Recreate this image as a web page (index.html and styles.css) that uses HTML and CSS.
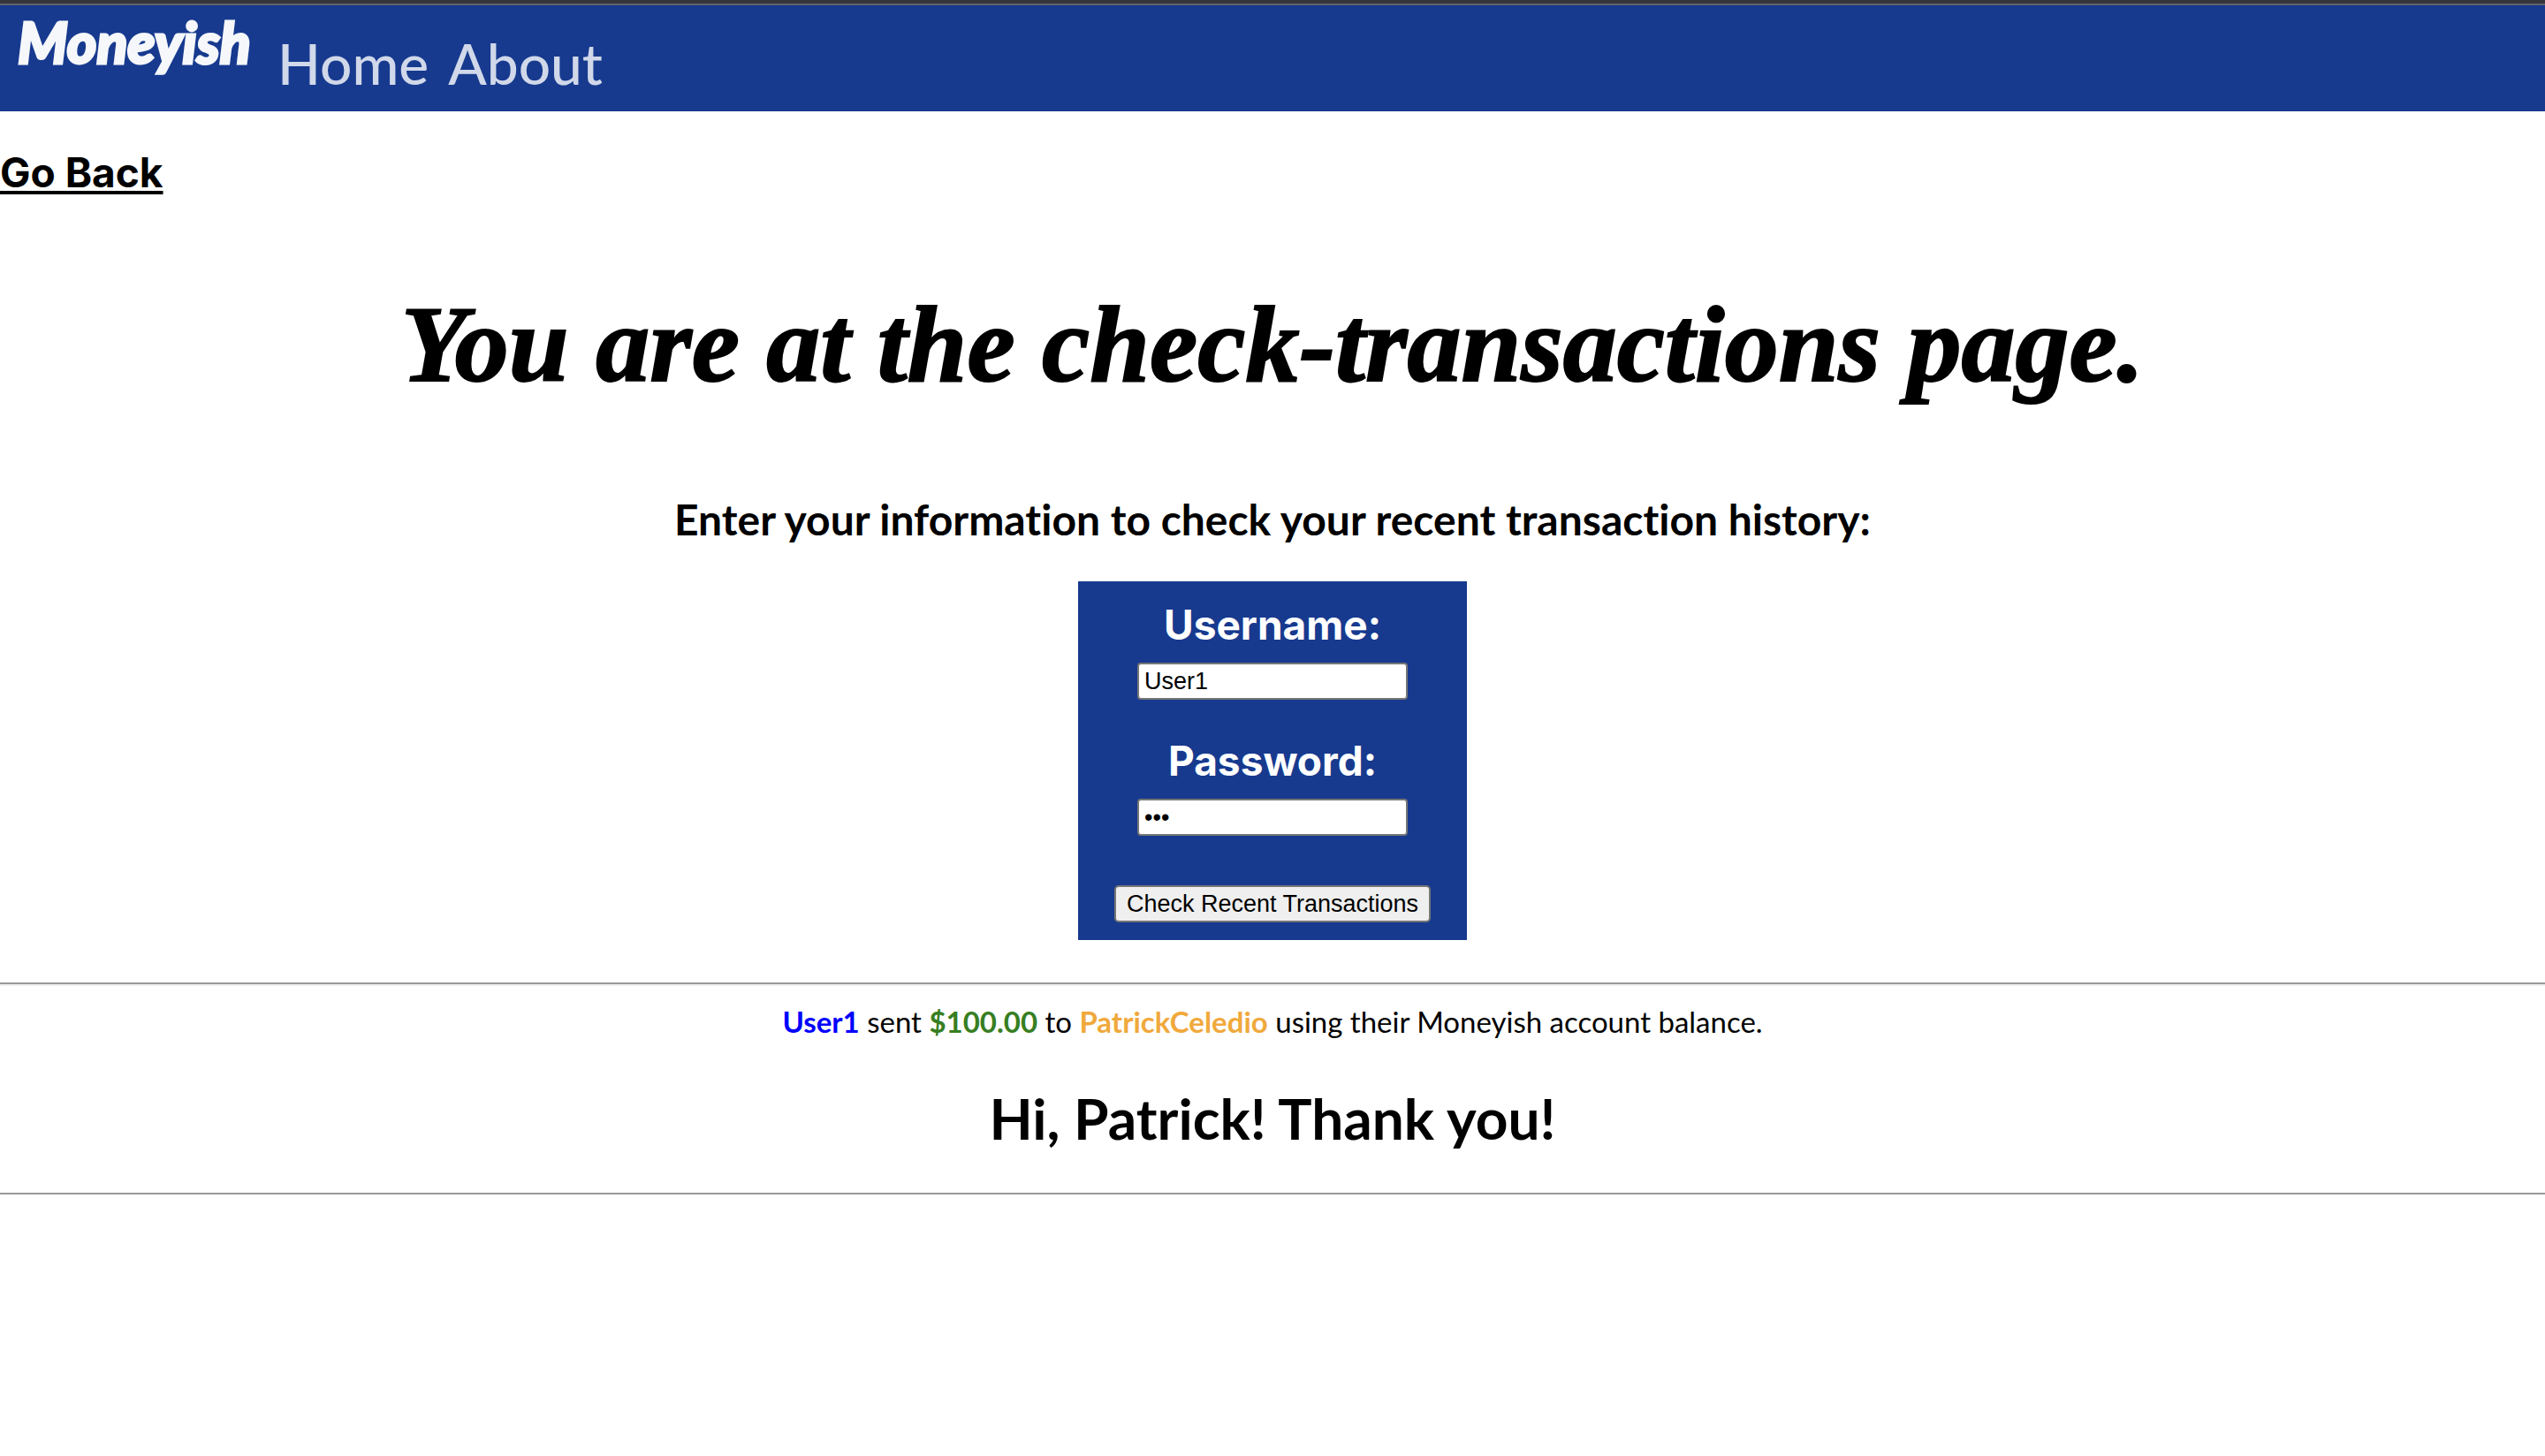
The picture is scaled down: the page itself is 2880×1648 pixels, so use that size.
FILE: index.html
```html
<!DOCTYPE html>
<html lang="en">
<head>
<meta charset="utf-8">
<title>Moneyish</title>
<link rel="stylesheet" href="styles.css">
</head>
<body>
<header class="navbar">
  <a class="brand" href="#">
    <svg class="logo" viewBox="0 0 264 80" width="264" height="80" role="img" aria-label="Moneyish">
      <text class="logo-text" x="0" y="54">Moneyish</text>
    </svg>
  </a>
  <nav class="links">
    <a class="nav-link" href="#">Home</a>
    <a class="nav-link" href="#">About</a>
  </nav>
</header>
<main class="page">
  <a class="back" href="#">Go Back</a>
  <h1 class="title">You are at the check-transactions page.</h1>
  <h2 class="subtitle">Enter your information to check your recent transaction history:</h2>
  <form class="card">
    <label class="label" for="username">Username:</label>
    <input class="field" id="username" type="text" value="User1">
    <label class="label" for="password">Password:</label>
    <input class="field" id="password" type="password" value="abc">
    <button class="submit" type="button">Check Recent Transactions</button>
  </form>
  <section class="transaction">
    <p class="summary"><b class="sender">User1</b> sent <b class="amount">$100.00</b> to <b class="receiver">PatrickCeledio</b> using their Moneyish account balance.</p>
    <h2 class="note">Hi, Patrick! Thank you!</h2>
  </section>
</main>
</body>
</html>
```
FILE: styles.css
```css
* { box-sizing: border-box; }

body {
  margin: 0;
  background: #fff;
  color: #000;
  font-family: Lato, sans-serif;
  font-variant-ligatures: none;
}

.navbar {
  display: flex;
  align-items: flex-start;
  gap: 30px;
  height: 126px;
  padding: 14px 20px;
  border-top: 4px solid #35363a;
  background: #173a8f;
  box-shadow: inset 0 2px #5f6368;
}

.brand { text-decoration: none; }

.logo {
  display: block;
  overflow: visible;
  fill: #f5f7fa;
}

.logo-text {
  stroke: #f5f7fa;
  stroke-width: 3px;
  font: italic 900 64px Lato, sans-serif;
}

.links {
  display: flex;
  gap: 22px;
  padding-top: 14px;
}

.nav-link {
  color: #d0d8e9;
  font-size: 64px;
  font-weight: 500;
  line-height: 80px;
  text-decoration: none;
}

.page {
  display: flex;
  flex-direction: column;
  align-items: center;
}

.back {
  align-self: flex-start;
  margin-top: 40px;
  color: #000;
  font: 700 46px/58px Inter, sans-serif;
  text-decoration-thickness: 4px;
  text-underline-offset: 4px;
}

.title {
  margin: 86px 0 0;
  font: italic 700 122px/160px "Liberation Serif", serif;
  -webkit-text-stroke: 2px #000;
}

.subtitle {
  margin: 88px 0 0;
  font-size: 48px;
  line-height: 60px;
}

.card {
  display: flex;
  flex-direction: column;
  align-items: center;
  width: 440px;
  margin-top: 40px;
  padding: 20px 0;
  background: #173a8f;
}

.label {
  color: #fff;
  font: 700 46px/58px Inter, sans-serif;
}

.field {
  width: 306px;
  height: 42px;
  margin: 14px 0 40px;
  padding: 2px 6px;
  border: 2px solid #767676;
  border-radius: 4px;
  background: #fff;
  font: 27px/32px "Liberation Sans", sans-serif;
}

.submit {
  height: 42px;
  margin-top: 16px;
  padding: 0 12px;
  border: 2px solid #767676;
  border-radius: 5px;
  background: #efefef;
  color: #000;
  font: 27px/36px "Liberation Sans", sans-serif;
}

.transaction {
  align-self: stretch;
  margin-top: 48px;
  padding: 20px 0 44px;
  border-top: 2px solid #999;
  border-bottom: 2px solid #999;
  box-shadow: inset 0 2px #eee, 0 2px #eee;
  text-align: center;
}

.summary {
  margin: 0;
  font-size: 33px;
  line-height: 44px;
}

.sender { color: #00f; }
.amount { color: #377e22; }
.receiver { color: #f0a93c; }

.note {
  margin: 48px 0 0;
  font-size: 64px;
  line-height: 80px;
}
```
